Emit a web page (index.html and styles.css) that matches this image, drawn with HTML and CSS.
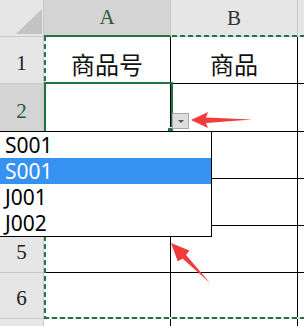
FILE: index.html
```html
<!DOCTYPE html>
<html lang="zh-CN">
<head>
  <meta charset="UTF-8">
  <title>数据验证下拉</title>
  <link rel="stylesheet" href="styles.css">
</head>
<body>

  <div class="sheet">
    <!-- 表格网格 -->
    <div class="grid">
      <div class="corner">
        <svg width="44" height="37" viewBox="0 0 44 37"><polygon points="42,9 42,34 16,34" fill="#c3c3c3"/></svg>
      </div>
      <div class="colhead sel">A</div>
      <div class="colhead">B</div>
      <div class="colhead last"></div>

      <div class="rowhead">1</div>
      <div class="cell text">商品号</div>
      <div class="cell text">商品</div>
      <div class="cell last"></div>

      <div class="rowhead sel">2</div>
      <div class="cell"></div>
      <div class="cell"></div>
      <div class="cell last"></div>

      <!-- 3、4 行被下拉列表挡住 -->
      <div class="rowhead"></div>
      <div class="cell"></div>
      <div class="cell"></div>
      <div class="cell last"></div>

      <div class="rowhead"></div>
      <div class="cell"></div>
      <div class="cell"></div>
      <div class="cell last"></div>

      <div class="rowhead">5</div>
      <div class="cell"></div>
      <div class="cell"></div>
      <div class="cell last"></div>

      <div class="rowhead">6</div>
      <div class="cell"></div>
      <div class="cell"></div>
      <div class="cell last"></div>

      <div class="rowhead"></div>
      <div class="cell"></div>
      <div class="cell"></div>
      <div class="cell last"></div>
    </div>

    <!-- 复制区域虚线 -->
    <div class="ants ants-top"></div>
    <div class="ants ants-left"></div>
    <div class="ants ants-bottom"></div>

    <!-- 活动单元格 A2 -->
    <div class="active-cell"></div>
    <div class="fill-handle"></div>
    <div class="drop-btn"><span class="drop-tri"></span></div>

    <!-- 下拉列表 -->
    <ul class="drop-list">
      <li>S001</li>
      <li class="hl">S001</li>
      <li>J001</li>
      <li>J002</li>
    </ul>

    <!-- 红色箭头 -->
    <svg class="arrows" width="304" height="326" viewBox="0 0 304 326">
      <polygon points="191,120 208,112 206,117.5 252,119.5 206,123 208,128" fill="#f23b3b"/>
      <polygon points="171,243 189.4,250.4 186.1,255 210,283 182.5,258.5 177.8,261.6" fill="#f23b3b"/>
    </svg>
  </div>

</body>
</html>
```

FILE: styles.css
```css
body {
  margin: 0;
  background: #fff;
  overflow: hidden;
}

.sheet {
  position: relative;
  width: 304px;
  height: 326px;
  overflow: hidden;
}

.grid {
  display: grid;
  grid-template-columns: 44px 127px 127px 1fr;
  grid-template-rows: 37px 47px 48px 47px 47px 47px 46px 1fr;
  height: 100%;
}

.corner {
  background: #e6e6e6;
  border-right: 1px solid #c8c8c8;
  border-bottom: 1px solid #c8c8c8;
}

.corner svg {
  display: block;
}

.colhead {
  background: #e6e6e6;
  border-right: 1px solid #c8c8c8;
  border-bottom: 1px solid #c8c8c8;
  font-family: "Liberation Serif", serif;
  font-size: 21px;
  color: #333;
  display: flex;
  align-items: flex-end;
  justify-content: center;
  padding-bottom: 5px;
  box-sizing: border-box;
}

.colhead.sel {
  background: #d4d4d4;
  color: #2a5a3c;
  border-bottom: 2px solid #217346;
}

.rowhead {
  background: #e6e6e6;
  border-right: 1px solid #c8c8c8;
  border-bottom: 1px solid #c8c8c8;
  font-family: "Liberation Serif", serif;
  font-size: 21px;
  color: #222;
  display: flex;
  align-items: flex-end;
  justify-content: center;
  padding-bottom: 7px;
  box-sizing: border-box;
}

.rowhead.sel {
  background: #d4d4d4;
  color: #2a5a3c;
}

.cell {
  border-right: 1px solid #000;
  border-bottom: 1px solid #000;
}

.cell.last,
.colhead.last {
  border-right: none;
}

.cell.text {
  font-family: "Noto Sans CJK SC", sans-serif;
  font-size: 24px;
  color: #111;
  display: flex;
  align-items: center;
  justify-content: center;
  padding-top: 6px;
  box-sizing: border-box;
}

.ants {
  position: absolute;
  --ant: #217346;
}

.ants-top {
  left: 44px;
  right: 0;
  top: 35px;
  height: 2px;
  background: repeating-linear-gradient(90deg, var(--ant) 0 5px, transparent 5px 8px);
}

.ants-bottom {
  left: 44px;
  right: 0;
  top: 317px;
  height: 2px;
  background: repeating-linear-gradient(90deg, var(--ant) 0 5px, #d8e6dd 5px 8px);
}

.ants-left {
  left: 44px;
  top: 36px;
  width: 2px;
  height: 283px;
  background: repeating-linear-gradient(180deg, var(--ant) 0 5px, transparent 5px 8px);
}

.active-cell {
  position: absolute;
  left: 44px;
  top: 82px;
  width: 125px;
  height: 47px;
  border-top: 2px solid #217346;
  border-right: 2px solid #217346;
  border-left: 2px solid #217346;
}

.fill-handle {
  position: absolute;
  left: 167px;
  top: 127px;
  width: 5px;
  height: 5px;
  background: #217346;
  border: 1px solid #fff;
}

.drop-btn {
  position: absolute;
  left: 172px;
  top: 113px;
  width: 15px;
  height: 14px;
  background: #dedede;
  border: 1px solid #a8a8a8;
  display: flex;
  align-items: center;
  justify-content: center;
}

.drop-tri {
  width: 0;
  height: 0;
  border-left: 3px solid transparent;
  border-right: 3px solid transparent;
  border-top: 3px solid #555;
}

.drop-list {
  position: absolute;
  left: -1px;
  top: 131px;
  width: 211px;
  margin: 0;
  padding: 0;
  list-style: none;
  background: #fff;
  border: 1px solid #000;
}

.drop-list li {
  height: 26px;
  line-height: 26px;
  padding-left: 5px;
  font-family: "Noto Sans", sans-serif;
  font-size: 21px;
  color: #000;
}

.drop-list li.hl {
  background: #3592f0;
  color: #fff;
}

.arrows {
  position: absolute;
  left: 0;
  top: 0;
  pointer-events: none;
}
```
